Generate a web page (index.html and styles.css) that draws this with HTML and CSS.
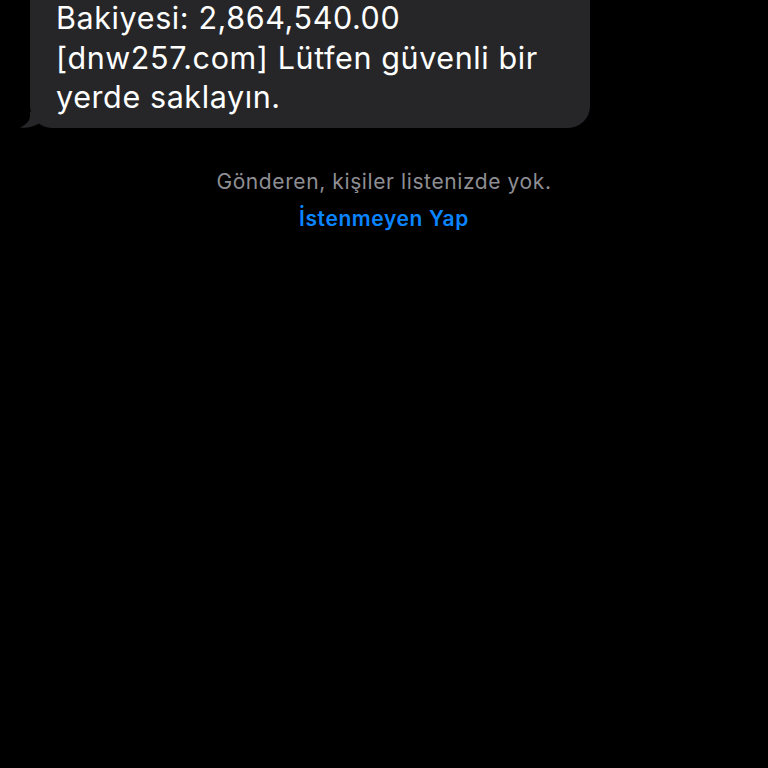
FILE: index.html
```html
<!DOCTYPE html>
<html lang="tr">
<head>
  <meta charset="UTF-8">
  <meta name="viewport" content="width=device-width, initial-scale=1.0">
  <title>Mesajlar</title>
  <link rel="stylesheet" href="styles.css">
</head>
<body>
  <div id="thread">
    <div class="bubble incoming">
      <p>Bakiyesi: 2,864,540.00<br>[dnw257.com] Lütfen güvenli bir<br>yerde saklayın.</p>
      <svg class="tail" width="26" height="16" viewBox="0 0 26 16">
        <path d="M12 0 L12 4 C12 9 8 13 2 15.5 C8 16.5 16 15 22 11 L26 0 Z" fill="#262628"/>
      </svg>
    </div>

    <div id="unknown-sender">
      <p class="notice">Gönderen, kişiler listenizde yok.</p>
      <a class="junk-link" href="#">İstenmeyen Yap</a>
    </div>
  </div>
</body>
</html>
```

FILE: styles.css
```css
body {
  margin: 0;
  background: #000;
  font-family: Inter, "Liberation Sans", sans-serif;
  height: 100vh;
  overflow: hidden;
}

#thread {
  display: flex;
  flex-direction: column;
}

.bubble {
  position: relative;
  width: 560px;
  margin: -40px 0 0 30px;
  padding: 0 20px 11px 26px;
  box-sizing: border-box;
  background: #262628;
  border-radius: 0 0 22px 22px;
}

.bubble p {
  margin: 0;
  color: #fff;
  font-size: 30.5px;
  line-height: 39.5px;
  padding-top: 38px;
  letter-spacing: 0.6px;
}

.bubble .tail {
  position: absolute;
  left: -12px;
  bottom: 0;
}

#unknown-sender {
  display: flex;
  flex-direction: column;
  align-items: center;
  margin-top: 42px;
}

.notice {
  margin: 0;
  color: #8e8e93;
  font-size: 21px;
  line-height: 24px;
  letter-spacing: 0.6px;
}

.junk-link {
  margin-top: 13px;
  color: #0a84ff;
  font-size: 21px;
  font-weight: 600;
  line-height: 24px;
  letter-spacing: 0.6px;
  text-decoration: none;
}
```
